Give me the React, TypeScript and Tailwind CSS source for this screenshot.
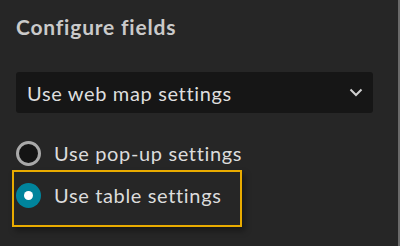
import { useState } from 'react';

const OPTIONS = [
    { id: 'popup', label: 'Use pop-up settings' },
    { id: 'table', label: 'Use table settings' },
];

export default function App() {
    const [selected, setSelected] = useState('table');

    return (
        <div
            className="w-[400px] h-[246px] bg-[#262626] border-r-2 border-[#6a6a6a] flex flex-col pl-4 pr-[26px] overflow-hidden"
            style={{ fontFamily: 'Lato, "Noto Sans", sans-serif' }}
        >
            {/* Title */}
            <h2 className="mt-[13px] text-[21px] leading-[28px] font-bold text-[#cacaca] tracking-[0.8px]">
                Configure fields
            </h2>

            {/* Select */}
            <button className="mt-[31px] h-[41px] w-[357px] flex items-center justify-between rounded-[3px] bg-[#161616] pl-[11px] pr-[10px] text-left">
                <span className="text-[20px] tracking-[0.65px] text-[#dedede] whitespace-nowrap">Use web map settings</span>
                <svg width="14" height="9" viewBox="0 0 14 9" className="text-[#cfcfcf]">
                    <path d="M1.5 1.5 L7 7 L12.5 1.5" fill="none" stroke="currentColor" strokeWidth="2" />
                </svg>
            </button>

            {/* Radio group */}
            <div className="mt-[26px] flex flex-col gap-[3px] w-[230px] -ml-1">
                {OPTIONS.map((opt) => {
                    const active = selected === opt.id;
                    return (
                        <label
                            key={opt.id}
                            onClick={() => setSelected(opt.id)}
                            className={
                                active
                                    ? 'h-[57px] flex items-start pt-[11px] pl-[2px] border-2 border-[#e9ab00] shadow-[3px_4px_6px_rgba(0,0,0,0.35)] cursor-pointer'
                                    : 'h-[28px] flex items-center pl-[4px] border-2 border-transparent cursor-pointer'
                            }
                        >
                            {active ? (
                                <span className="w-[25px] h-[25px] rounded-full bg-[#00849c] flex items-center justify-center shrink-0">
                                    <span className="w-[9px] h-[9px] rounded-full bg-white" />
                                </span>
                            ) : (
                                <span className="w-[25px] h-[25px] rounded-full border-[3px] border-[#a9a9a9] bg-[#141414] shrink-0 -ml-[2px]" />
                            )}
                            <span className="ml-[13px] text-[20px] leading-[25px] tracking-[0.65px] text-[#dcdcdc] whitespace-nowrap">
                                {opt.label}
                            </span>
                        </label>
                    );
                })}
            </div>
        </div>
    );
}
